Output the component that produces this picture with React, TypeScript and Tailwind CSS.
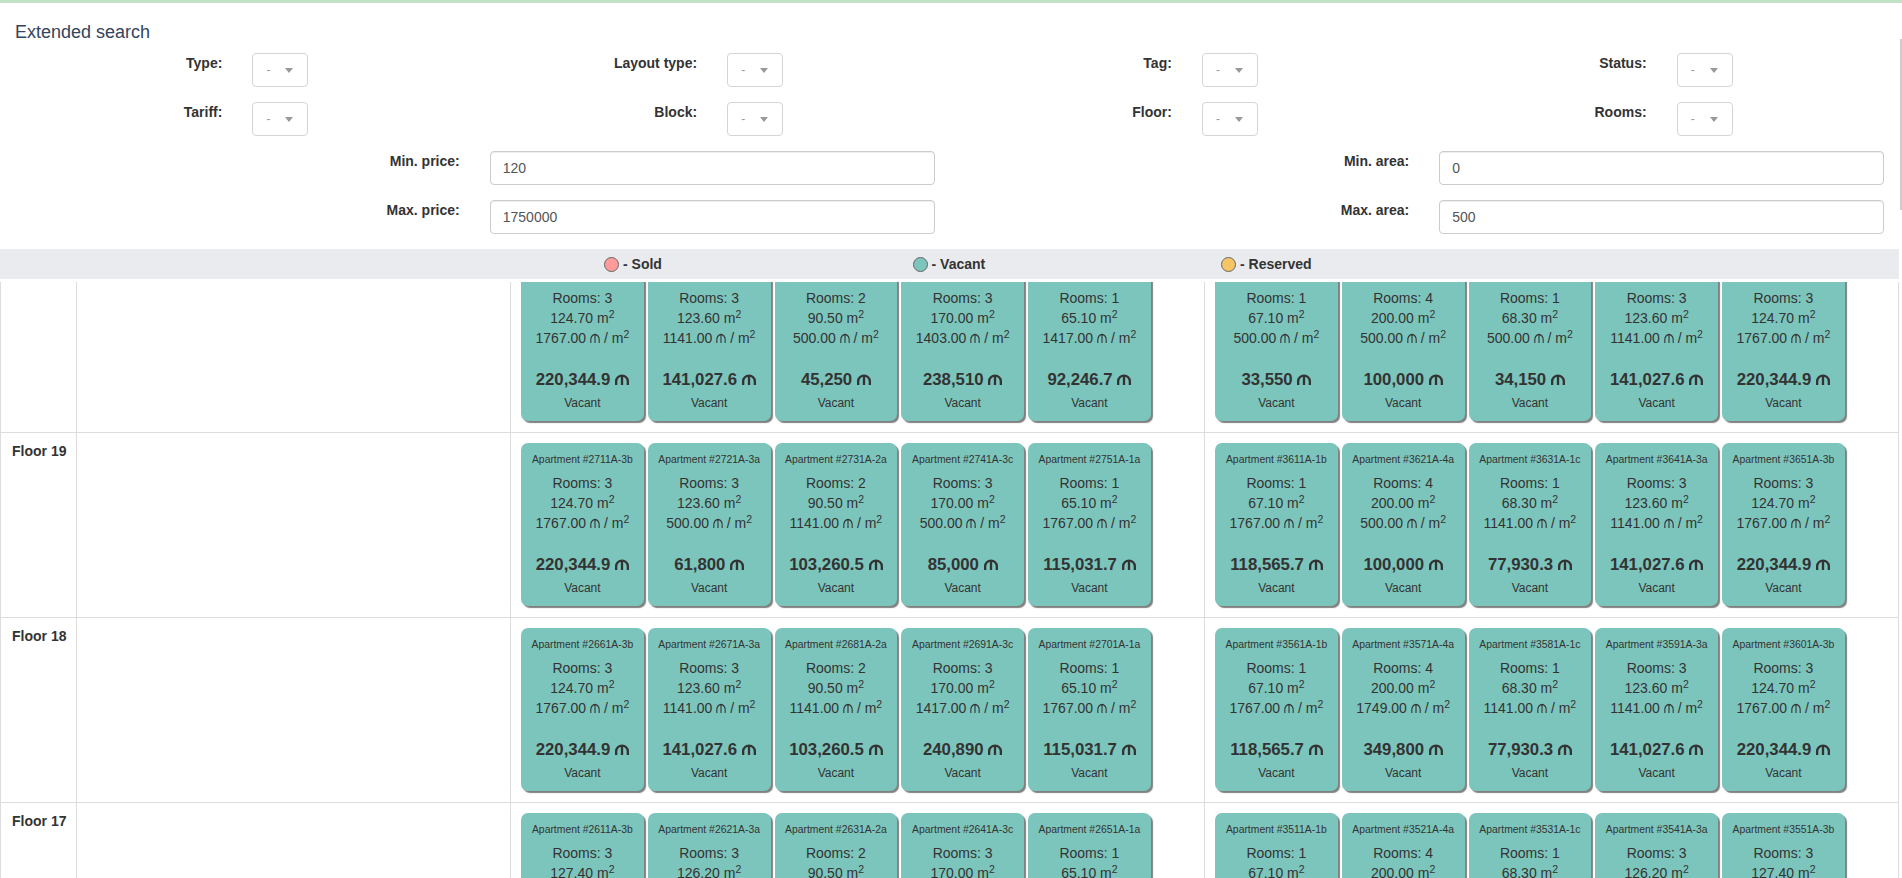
type Apt = [string, number, string, string?, string?];

const floors: { name: string; left: Apt[]; right: Apt[] }[] = [
  {
    name: "Floor 20",
    left: [
      ["2761A-3b", 3, "124.70", "1767.00", "220,344.9"],
      ["2771A-3a", 3, "123.60", "1141.00", "141,027.6"],
      ["2781A-2a", 2, "90.50", "500.00", "45,250"],
      ["2791A-3c", 3, "170.00", "1403.00", "238,510"],
      ["2801A-1a", 1, "65.10", "1417.00", "92,246.7"],
    ],
    right: [
      ["3711A-1b", 1, "67.10", "500.00", "33,550"],
      ["3721A-4a", 4, "200.00", "500.00", "100,000"],
      ["3731A-1c", 1, "68.30", "500.00", "34,150"],
      ["3741A-3a", 3, "123.60", "1141.00", "141,027.6"],
      ["3751A-3b", 3, "124.70", "1767.00", "220,344.9"],
    ],
  },
  {
    name: "Floor 19",
    left: [
      ["2711A-3b", 3, "124.70", "1767.00", "220,344.9"],
      ["2721A-3a", 3, "123.60", "500.00", "61,800"],
      ["2731A-2a", 2, "90.50", "1141.00", "103,260.5"],
      ["2741A-3c", 3, "170.00", "500.00", "85,000"],
      ["2751A-1a", 1, "65.10", "1767.00", "115,031.7"],
    ],
    right: [
      ["3611A-1b", 1, "67.10", "1767.00", "118,565.7"],
      ["3621A-4a", 4, "200.00", "500.00", "100,000"],
      ["3631A-1c", 1, "68.30", "1141.00", "77,930.3"],
      ["3641A-3a", 3, "123.60", "1141.00", "141,027.6"],
      ["3651A-3b", 3, "124.70", "1767.00", "220,344.9"],
    ],
  },
  {
    name: "Floor 18",
    left: [
      ["2661A-3b", 3, "124.70", "1767.00", "220,344.9"],
      ["2671A-3a", 3, "123.60", "1141.00", "141,027.6"],
      ["2681A-2a", 2, "90.50", "1141.00", "103,260.5"],
      ["2691A-3c", 3, "170.00", "1417.00", "240,890"],
      ["2701A-1a", 1, "65.10", "1767.00", "115,031.7"],
    ],
    right: [
      ["3561A-1b", 1, "67.10", "1767.00", "118,565.7"],
      ["3571A-4a", 4, "200.00", "1749.00", "349,800"],
      ["3581A-1c", 1, "68.30", "1141.00", "77,930.3"],
      ["3591A-3a", 3, "123.60", "1141.00", "141,027.6"],
      ["3601A-3b", 3, "124.70", "1767.00", "220,344.9"],
    ],
  },
  {
    name: "Floor 17",
    left: [
      ["2611A-3b", 3, "127.40"],
      ["2621A-3a", 3, "126.20"],
      ["2631A-2a", 2, "90.50"],
      ["2641A-3c", 3, "170.00"],
      ["2651A-1a", 1, "65.10"],
    ],
    right: [
      ["3511A-1b", 1, "67.10"],
      ["3521A-4a", 4, "200.00"],
      ["3531A-1c", 1, "68.30"],
      ["3541A-3a", 3, "126.20"],
      ["3551A-3b", 3, "127.40"],
    ],
  },
];

// dram sign, the site's own font draws it as an arch with a middle stem
function Dram({ bold }: { bold?: boolean }) {
  return (
    <svg
      viewBox="0 0 12 10"
      preserveAspectRatio="none"
      aria-label="֏"
      className={bold ? "inline h-[11px] w-[14px] align-baseline" : "inline h-[10px] w-[10px] align-baseline"}
      fill="none"
      stroke="currentColor"
      strokeWidth={bold ? 2 : 1.3}
    >
      <path d="M1 10V6.5a5 5 0 0 1 10 0V10M6 1.5V10" />
    </svg>
  );
}

function Filter({ label }: { label: string }) {
  return (
    <div className="grid grid-cols-2">
      <label className="px-[15px] text-right text-sm/5 font-bold text-[#333]">{label}</label>
      <div className="px-[15px]">
        <div className="flex h-[34px] w-[56px] items-center justify-between rounded-[4px] border border-[#d5d5d5] pl-[13px] pr-[14px] text-xs text-[#999]">
          <span>-</span>
          <span className="h-0 w-0 border-x-4 border-t-[5px] border-x-transparent border-t-[#999]" />
        </div>
      </div>
    </div>
  );
}

function RangeInput({ label, value }: { label: string; value: string }) {
  return (
    <div className="grid grid-cols-2">
      <label className="px-[15px] text-right text-sm/5 font-bold text-[#333]">{label}</label>
      <div className="pl-[15px] pr-[15px]">
        <input
          readOnly
          value={value}
          className="block h-[34px] w-full rounded-[4px] border border-[#ccc] px-3 text-sm text-[#555] shadow-[inset_0_1px_1px_rgba(0,0,0,0.075)]"
        />
      </div>
    </div>
  );
}

function Legend({ color, label }: { color: string; label: string }) {
  return (
    <div className="flex w-[308.5px] items-center gap-[4px] text-sm font-bold text-[#333]">
      <span className={`h-[15px] w-[15px] rounded-full border border-[#666] ${color}`} />
      <span>- {label}</span>
    </div>
  );
}

function Card({ apt }: { apt: Apt }) {
  const [id, rooms, area, price, total] = apt;
  return (
    <div className="flex h-[163px] w-[122.75px] shrink-0 flex-col items-center rounded-[7px] bg-[#7cc5bc] pt-[10px] text-center text-sm/5 text-[#333] shadow-[2px_2px_1px_#808080]">
      <div className="mb-[6px] whitespace-nowrap text-[10.4px]/[14px]">Apartment #{id}</div>
      <div>Rooms: {rooms}</div>
      <div>
        {area} m<sup>2</sup>
      </div>
      {price && (
        <div>
          {price} <Dram /> / m<sup>2</sup>
        </div>
      )}
      {total && (
        <>
          <div className="mt-[20px] whitespace-nowrap text-[16.8px]/6 font-bold">
            {total} <Dram bold />
          </div>
          <div className="mt-[3px] text-xs/[17px]">Vacant</div>
        </>
      )}
    </div>
  );
}

export default function App() {
  return (
    <div className="relative flex h-screen flex-col overflow-hidden bg-white font-['Liberation_Sans',Arial,sans-serif]">
      <div className="h-[3px] shrink-0 bg-[#c2e2c6]" />
      <div className="w-[1899px] shrink-0">
        <h3 className="flex h-[50px] items-center pl-[15px] pt-[8px] text-lg text-[#33445c]">Extended search</h3>
        <div className="grid grid-cols-4 gap-y-[15px]">
          {["Type:", "Layout type:", "Tag:", "Status:", "Tariff:", "Block:", "Floor:", "Rooms:"].map((l) => (
            <Filter key={l} label={l} />
          ))}
        </div>
        <div className="mt-[15px] grid grid-cols-2 gap-y-[15px]">
          <RangeInput label="Min. price:" value="120" />
          <RangeInput label="Min. area:" value="0" />
          <RangeInput label="Max. price:" value="1750000" />
          <RangeInput label="Max. area:" value="500" />
        </div>
        <div className="mt-[15px] flex h-[30px] items-center bg-[#e9ebef] pl-[604px]">
          <Legend color="bg-[#ff9b9b]" label="Sold" />
          <Legend color="bg-[#7cc5bc]" label="Vacant" />
          <Legend color="bg-[#f6c566]" label="Reserved" />
        </div>
      </div>
      <div className="mt-[3px] min-h-0 w-[1899px] flex-1 overflow-hidden">
        <div className="-mt-[34px]">
          {floors.map((f) => (
            <div
              key={f.name}
              className="grid h-[185px] grid-cols-[76px_434px_694px_695px] border-b border-[#ddd] text-[#333]"
            >
              <div className="border-l border-[#ddd] pl-[11px] pt-[8px] text-sm/5 font-bold">{f.name}</div>
              <div className="border-l border-[#ddd]" />
              <div className="flex gap-[4px] border-l border-[#ddd] pl-[10px] pt-[10px]">
                {f.left.map((a) => (
                  <Card key={a[0]} apt={a} />
                ))}
              </div>
              <div className="flex gap-[4px] border-x border-[#ddd] pl-[10px] pt-[10px]">
                {f.right.map((a) => (
                  <Card key={a[0]} apt={a} />
                ))}
              </div>
            </div>
          ))}
        </div>
      </div>
      <div className="absolute right-0 top-[39px] h-[171px] w-[2px] bg-[#ccc]" />
    </div>
  );
}
